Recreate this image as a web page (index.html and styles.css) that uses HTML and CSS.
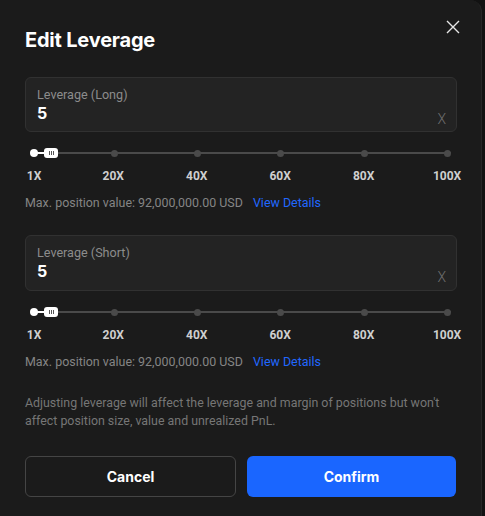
FILE: index.html
```html
<!DOCTYPE html>
<html>
<head>
<meta charset="utf-8">
<link rel="stylesheet" href="styles.css">
</head>
<body>
<div class="modal">
  <div class="header">
    <h1 class="title">Edit Leverage</h1>
    <svg class="close" width="14" height="14" viewBox="0 0 14 14"><path d="M1 1L13 13M13 1L1 13" stroke="#e6e6e6" stroke-width="1.4" fill="none"/></svg>
  </div>

  <div class="field">
    <div class="label">Leverage (Long)</div>
    <div class="value-row"><span class="value">5</span><span class="unit">X</span></div>
  </div>
  <div class="slider">
    <div class="track">
      <span class="fill"></span>
      <span class="thumb"><i></i><i></i><i></i></span>
      <span class="dot active"></span><span class="gap g19"></span><span class="dot"></span><span class="gap"></span><span class="dot"></span><span class="gap"></span><span class="dot"></span><span class="gap"></span><span class="dot"></span><span class="gap"></span><span class="dot"></span>
    </div>
    <div class="marks">
      <span class="mark">1X</span><span class="gap g19"></span><span class="mark">20X</span><span class="gap"></span><span class="mark">40X</span><span class="gap"></span><span class="mark">60X</span><span class="gap"></span><span class="mark">80X</span><span class="gap"></span><span class="mark">100X</span>
    </div>
  </div>
  <div class="maxpos">Max. position value: 92,000,000.00 USD <a class="link">View Details</a></div>

  <div class="field second">
    <div class="label">Leverage (Short)</div>
    <div class="value-row"><span class="value">5</span><span class="unit">X</span></div>
  </div>
  <div class="slider">
    <div class="track">
      <span class="fill"></span>
      <span class="thumb"><i></i><i></i><i></i></span>
      <span class="dot active"></span><span class="gap g19"></span><span class="dot"></span><span class="gap"></span><span class="dot"></span><span class="gap"></span><span class="dot"></span><span class="gap"></span><span class="dot"></span><span class="gap"></span><span class="dot"></span>
    </div>
    <div class="marks">
      <span class="mark">1X</span><span class="gap g19"></span><span class="mark">20X</span><span class="gap"></span><span class="mark">40X</span><span class="gap"></span><span class="mark">60X</span><span class="gap"></span><span class="mark">80X</span><span class="gap"></span><span class="mark">100X</span>
    </div>
  </div>
  <div class="maxpos">Max. position value: 92,000,000.00 USD <a class="link">View Details</a></div>

  <p class="note">Adjusting leverage will affect the leverage and margin of positions but won't affect position size, value and unrealized PnL.</p>

  <div class="actions">
    <button class="btn cancel">Cancel</button>
    <button class="btn confirm">Confirm</button>
  </div>
</div>
</body>
</html>
```
FILE: styles.css
```css
html, body {
  margin: 0;
  padding: 0;
  background: #121212;
  height: 516px;
  overflow: hidden;
}
body {
  font-family: Roboto, "Noto Sans", sans-serif;
}
.modal {
  width: 482px;
  height: 540px;
  box-sizing: border-box;
  background: #1b1b1b;
  border-right: 1px solid #262626;
  border-radius: 0 12px 0 0;
  padding: 0 24px 0 25px;
}
.header {
  display: flex;
  justify-content: space-between;
  align-items: flex-start;
  height: 77px;
}
.title {
  margin: 28px 0 0;
  font-family: Inter, Roboto, sans-serif;
  font-size: 20px;
  line-height: 24px;
  font-weight: 700;
  color: #ffffff;
  letter-spacing: -0.2px;
}
.close {
  margin-top: 20px;
  margin-right: -3px;
}
.field {
  height: 55px;
  box-sizing: border-box;
  background: #232323;
  border: 1px solid #313131;
  border-radius: 6px;
  padding: 9px 11px 0 11px;
}
.field.second {
  height: 56px;
  margin-top: 24px;
}
.label {
  font-size: 12.6px;
  line-height: 16px;
  color: #8c8c8c;
}
.value-row {
  display: flex;
  justify-content: space-between;
  align-items: flex-end;
}
.value {
  font-family: Inter, Roboto, sans-serif;
  font-size: 16px;
  line-height: 20px;
  font-weight: 700;
  color: #ffffff;
}
.unit {
  font-size: 14px;
  line-height: 16px;
  color: #6f6f6f;
  font-weight: 300;
  margin-bottom: -4px;
  margin-right: -1px;
}
.slider {
  margin-top: 16px;
}
.track {
  position: relative;
  height: 10px;
  margin: 0 6px 0 5px;
  display: flex;
  align-items: center;
  background: linear-gradient(#4a4a4a, #4a4a4a) center / 100% 2px no-repeat;
}
.gap {
  flex: 20 1 0;
}
.gap.g19 {
  flex: 19 1 0;
}
.dot {
  flex: none;
  width: 7px;
  height: 7px;
  border-radius: 50%;
  background: #4a4a4a;
}
.dot.active {
  width: 8px;
  height: 8px;
  background: #ffffff;
  position: relative;
  z-index: 1;
}
.fill {
  position: absolute;
  left: 4px;
  top: 4px;
  width: 12px;
  height: 2px;
  background: #ffffff;
}
.thumb {
  position: absolute;
  left: 14px;
  top: 0;
  width: 14px;
  height: 10px;
  border-radius: 3px;
  background: #ffffff;
  display: flex;
  justify-content: center;
  align-items: center;
  gap: 1px;
  z-index: 2;
}
.thumb i {
  width: 1px;
  height: 4px;
  background: #555;
}
.marks {
  display: flex;
  margin: 10px 10px 0 9px;
}
.mark {
  flex: none;
  width: 0;
  display: flex;
  justify-content: center;
  white-space: nowrap;
  font-size: 12px;
  line-height: 16px;
  font-weight: 700;
  color: #cfcfcf;
}
.maxpos {
  margin-top: 11px;
  font-size: 12.45px;
  line-height: 16px;
  color: #858585;
}
.link {
  color: #2168ff;
  margin-left: 7px;
}
.note {
  margin: 24px 0 0;
  font-size: 12.4px;
  line-height: 18px;
  color: #767676;
}
.actions {
  display: flex;
  gap: 11px;
  margin: 26px 1px 0 0;
}
.btn {
  flex: 1;
  height: 41px;
  border-radius: 6px;
  font-family: Inter, Roboto, sans-serif;
  font-size: 14px;
  font-weight: 700;
  color: #ffffff;
  cursor: pointer;
}
.cancel {
  background: transparent;
  border: 1px solid #454545;
}
.confirm {
  background: #1a66ff;
  border: none;
}
```
